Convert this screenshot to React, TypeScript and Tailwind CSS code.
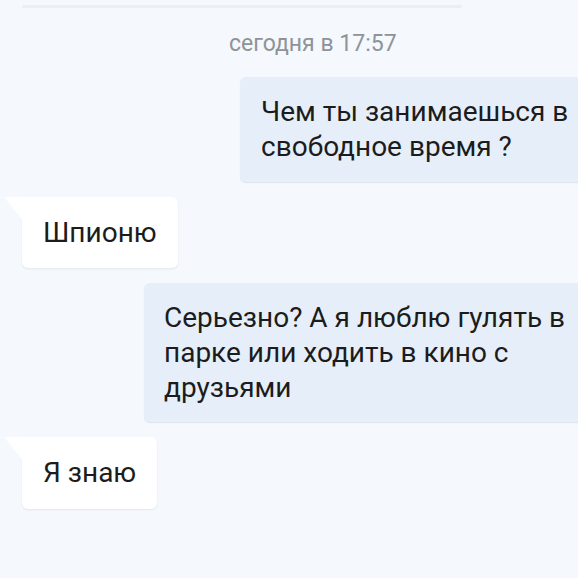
export default function App() {
  return (
    <div className="w-[578px] h-[578px] overflow-hidden bg-[#f5f8fc] font-['Roboto','Liberation_Sans',sans-serif] text-[#1c1c1c]">
      <div className="ml-[22px] mt-[5px] h-[3px] w-[440px] rounded-full bg-[#eceef1]" />
      <div className="mt-[22px] pl-[229px] text-[23px] leading-[28px] text-[#8e939a]">сегодня в 17:57</div>

      <div className="mt-[19px] ml-[240px] w-[380px] rounded-[6px] bg-[#e6eff9] pl-[21px] pt-[17px] pb-[18px] text-[28px] leading-[35px] whitespace-nowrap shadow-[0_1px_1px_rgba(60,90,130,0.12)]">
        <div>Чем ты занимаешься в</div>
        <div>свободное время ?</div>
      </div>

      <div className="relative mt-[15px] ml-[22px] w-fit rounded-[6px] rounded-tl-none bg-white px-[21px] pt-[18px] pb-[18px] text-[28px] leading-[35px] shadow-[0_1px_2px_rgba(60,90,130,0.1)]">
        <svg className="absolute -left-[18px] top-0" width="18" height="23" viewBox="0 0 18 23">
          <polygon points="0,0 18.5,0 18.5,23" fill="#ffffff" />
        </svg>
        Шпионю
      </div>

      <div className="mt-[15px] ml-[144px] w-[480px] rounded-[6px] bg-[#e6eff9] pl-[20px] pt-[17px] pb-[17px] text-[28px] leading-[35px] whitespace-nowrap shadow-[0_1px_1px_rgba(60,90,130,0.12)]">
        <div>Серьезно? А я люблю гулять в</div>
        <div>парке или ходить в кино с</div>
        <div>друзьями</div>
      </div>

      <div className="relative mt-[15px] ml-[22px] w-fit rounded-[6px] rounded-tl-none bg-white px-[21px] pt-[18px] pb-[19px] text-[28px] leading-[35px] shadow-[0_1px_2px_rgba(60,90,130,0.1)]">
        <svg className="absolute -left-[18px] top-0" width="18" height="23" viewBox="0 0 18 23">
          <polygon points="0,0 18.5,0 18.5,23" fill="#ffffff" />
        </svg>
        Я знаю
      </div>
    </div>
  );
}
